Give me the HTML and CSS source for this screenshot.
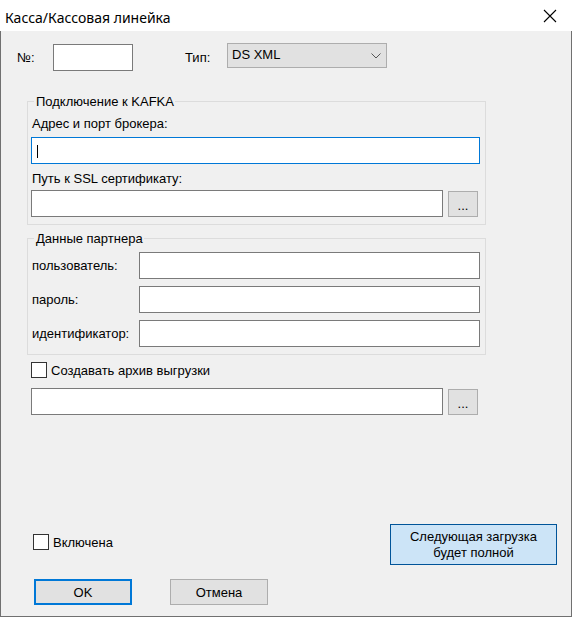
FILE: index.html
```html
<!DOCTYPE html>
<html lang="ru">
<head>
<meta charset="utf-8">
<title>Касса/Кассовая линейка</title>
<link rel="stylesheet" href="styles.css">
</head>
<body>
<div class="window">
  <div class="titlebar">
    <span class="title">Касса/Кассовая линейка</span>
    <svg class="close" width="14" height="14" viewBox="0 0 14 14"><path d="M1 1L13 13M13 1L1 13" stroke="#000" stroke-width="1.1" fill="none"/></svg>
  </div>
  <div class="client">
    <div class="row-top">
      <span class="lbl lbl-no">№:</span>
      <div class="textbox tb-no"></div>
      <span class="lbl lbl-type">Тип:</span>
      <div class="combo">
        <span class="combo-text">DS XML</span>
        <svg class="chevron" width="10" height="6" viewBox="0 0 10 6"><path d="M0.5 0.5L5 5L9.5 0.5" stroke="#555" stroke-width="1" fill="none"/></svg>
      </div>
    </div>

    <fieldset class="group group-kafka">
      <legend>Подключение к KAFKA</legend>
      <div class="field-label">Адрес и порт брокера:</div>
      <div class="textbox tb-full focused"><span class="caret"></span></div>
      <div class="field-label">Путь к SSL сертификату:</div>
      <div class="path-row">
        <div class="textbox tb-path"></div>
        <button class="btn btn-browse">...</button>
      </div>
    </fieldset>

    <fieldset class="group group-partner">
      <legend>Данные партнера</legend>
      <div class="partner-row"><span class="partner-label">пользователь:</span><div class="textbox tb-partner"></div></div>
      <div class="partner-row"><span class="partner-label">пароль:</span><div class="textbox tb-partner"></div></div>
      <div class="partner-row"><span class="partner-label">идентификатор:</span><div class="textbox tb-partner"></div></div>
    </fieldset>

    <label class="check check-archive"><span class="box"></span><span class="check-text">Создавать архив выгрузки</span></label>
    <div class="path-row archive-row">
      <div class="textbox tb-path"></div>
      <button class="btn btn-browse">...</button>
    </div>

    <div class="bottom-row">
      <label class="check check-enabled"><span class="box"></span><span class="check-text">Включена</span></label>
      <button class="btn btn-full">Следующая загрузка<br>будет полной</button>
    </div>

    <div class="dialog-buttons">
      <button class="btn btn-ok">OK</button>
      <button class="btn btn-cancel">Отмена</button>
    </div>
  </div>
</div>
</body>
</html>
```

FILE: styles.css
```css
* { box-sizing: border-box; }
html, body { margin: 0; padding: 0; }
body {
  width: 572px;
  height: 617px;
  overflow: hidden;
  background: #f0f0f0;
  font-family: "Liberation Sans", Arial, sans-serif;
  font-size: 13px;
  color: #000;
}
.window {
  width: 572px;
  height: 617px;
  display: flex;
  flex-direction: column;
}
.titlebar {
  flex: none;
  height: 31px;
  background: #fff;
  display: flex;
  align-items: center;
  justify-content: space-between;
  padding: 0 15px 0 5px;
}
.title {
  font-family: "Noto Sans", sans-serif;
  font-size: 14px;
  line-height: 20px;
  padding-top: 4px;
}
.close { display: block; margin-top: 1px; }

.client {
  flex: 1;
  background: #f0f0f0;
  border: 1px solid #707070;
  border-top: none;
}

.lbl { line-height: 15px; }
.row-top {
  display: flex;
  align-items: flex-start;
  height: 28px;
  margin-top: 12px;
}
.lbl-no { margin-left: 16px; width: 36px; margin-top: 7px; }
.lbl-type { margin-left: 52px; width: 42px; margin-top: 7px; }

.textbox {
  background: #fff;
  border: 1px solid #7a7a7a;
  height: 27px;
  flex: none;
}
.tb-no { width: 80px; margin-top: 1px; }
.combo {
  width: 160px;
  height: 25px;
  background: #e1e1e1;
  border: 1px solid #adadad;
  display: flex;
  align-items: center;
  justify-content: space-between;
  padding: 0 5px 2px 4px;
}
.combo-text { line-height: 15px; }
.chevron { display: block; margin-top: 2px; }

.group {
  margin: 0 0 0 26px;
  width: 459px;
  border: 1px solid #dcdcdc;
  padding: 0 5px 7px 3px;
  min-width: 0;
}
.group legend {
  margin-left: 3px;
  padding: 0 1px 0 2px;
  line-height: 15px;
}
.group-kafka { margin-top: 23px; }
.group-partner { margin-top: 6px; }

.field-label {
  line-height: 15px;
  margin-top: 7px;
  padding-left: 1px;
}
.tb-full { width: 449px; margin-top: 6px; }
.focused { border-color: #0078d7; display: flex; align-items: center; }
.caret {
  display: block;
  width: 1px;
  height: 13px;
  background: #000;
  margin-left: 5px;
  margin-top: 1px;
}
.path-row {
  display: flex;
  align-items: flex-start;
  margin-top: 4px;
}
.tb-path { width: 412px; }

.btn {
  font-family: "Liberation Sans", Arial, sans-serif;
  font-size: 13px;
  color: #000;
  background: #e1e1e1;
  border: 1px solid #adadad;
  padding: 0;
  margin: 0;
  line-height: 15px;
}
.btn-browse {
  width: 30px;
  height: 26px;
  margin-left: 5px;
  margin-top: 1px;
  padding-top: 2px;
}

.partner-row {
  display: flex;
  align-items: center;
  height: 27px;
  margin-top: 7px;
}
.partner-row:first-of-type { margin-top: 6px; }
.partner-label { width: 108px; padding-left: 1px; line-height: 15px; }
.tb-partner { width: 341px; }

.check {
  display: flex;
  align-items: center;
  height: 16px;
}
.box {
  width: 16px;
  height: 16px;
  border: 1px solid #333;
  background: #fff;
  flex: none;
}
.check-text { margin-left: 4px; line-height: 15px; }
.check-archive { margin: 7px 0 0 30px; width: max-content; }
.archive-row { margin: 10px 0 0 30px; }

.bottom-row {
  display: flex;
  justify-content: space-between;
  align-items: flex-start;
  margin: 109px 14px 0 32px;
}
.check-enabled { margin-top: 10px; }
.btn-full {
  width: 167px;
  height: 41px;
  background: #cce4f7;
  border: 1px solid #005499;
  line-height: 16px;
}

.dialog-buttons {
  display: flex;
  margin: 14px 0 0 33px;
}
.btn-ok {
  width: 98px;
  height: 26px;
  border: 2px solid #0078d7;
}
.btn-cancel {
  width: 98px;
  height: 26px;
  margin-left: 38px;
}
```
